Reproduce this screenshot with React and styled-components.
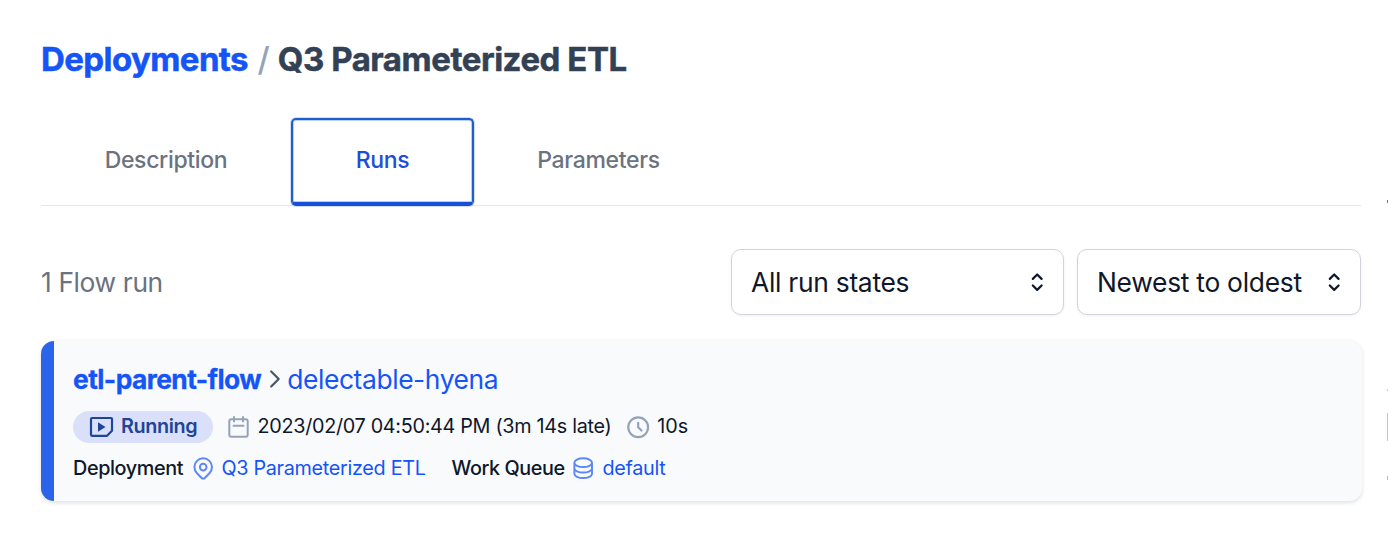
import React from "react";
import styled, { createGlobalStyle } from "styled-components";

const GlobalStyle = createGlobalStyle`
  * { box-sizing: border-box; }
  body {
    margin: 0;
    background: #fff;
    color: #0f172a;
    font-family: Inter, "Liberation Sans", sans-serif;
    overflow: hidden;
  }
`;

const Page = styled.div`
  display: flex;
  justify-content: space-between;
  height: 548px;
  overflow: hidden;
`;

const Main = styled.main`
  width: 1321px;
  margin-left: 41px;
  padding-top: 35px;
`;

const Heading = styled.h1`
  display: flex;
  align-items: center;
  height: 48px;
  margin: 0;
  font-size: 33px;
  font-weight: 700;
  letter-spacing: -0.46px;
  color: #334155;
  white-space: nowrap;
  -webkit-text-stroke: 0.5px currentColor;
`;

const HeadingLink = styled.a`
  color: #1554f6;
  letter-spacing: -0.58px;
`;

const Slash = styled.span`
  margin: 0 8.5px 0 9.5px;
  font-weight: 500;
  color: #94a3b8;
  -webkit-text-stroke: 0;
`;

const Tabs = styled.nav`
  display: flex;
  width: 1320px;
  height: 88px;
  margin-top: 35px;
  box-shadow: inset 0 -1px #e5e7eb;
`;

const Tab = styled.button`
  width: ${(p) => p.$width}px;
  height: 88px;
  padding: 0 0 4px;
  border: 0;
  background: transparent;
  font: 500 23px/28px Inter, "Liberation Sans", sans-serif;
  letter-spacing: -0.33px;
  color: #6b7280;
  white-space: nowrap;
  ${(p) =>
    p.$active &&
    `
    padding: 0 0 2px;
    color: #1d4ed8;
    background: #fff;
    border: 2px solid #1f5fcd;
    border-bottom: 4px solid #1650d8;
    border-radius: 5px;
    box-shadow: inset 0 0 0 1px rgba(31, 95, 205, 0.3), 0 0 0 1px rgba(31, 95, 205, 0.2);
  `}
`;

const Toolbar = styled.div`
  display: flex;
  align-items: center;
  gap: 13px;
  width: 1320px;
  height: 66px;
  margin-top: 43px;
`;

const Count = styled.span`
  flex: 1;
  padding-bottom: 1px;
  font-size: 26.4px;
  letter-spacing: -0.38px;
  color: #6b7280;
`;

const Select = styled.button`
  display: flex;
  align-items: center;
  justify-content: space-between;
  width: ${(p) => p.$width}px;
  height: 66px;
  padding: 0 12.5px 0 19px;
  border: 1px solid #d1d5db;
  border-radius: 10px;
  background: #fff;
  box-shadow: 0 1px 3px rgba(0, 0, 0, 0.06);
  font: 400 26.4px/32px Inter, "Liberation Sans", sans-serif;
  letter-spacing: -0.28px;
  color: #0f172a;
  white-space: nowrap;
`;

const SelectValue = styled.span`
  padding-bottom: 1px;
`;

const Card = styled.article`
  width: 1320.5px;
  height: 160px;
  margin-top: 26px;
  padding: 21px 0 0 19px;
  border-left: 13px solid #2b63eb;
  border-radius: 13px;
  background: #f8fafc;
  box-shadow: 0 1.5px 4px rgba(0, 0, 0, 0.12);
  white-space: nowrap;
`;

const FlowTitle = styled.div`
  display: flex;
  align-items: center;
  height: 34px;
  font-size: 26.4px;
  color: #1554f6;
`;

const FlowName = styled.a`
  padding-bottom: 1px;
  font-weight: 700;
  letter-spacing: -0.58px;
  -webkit-text-stroke: 0.3px currentColor;
`;

const RunName = styled.a`
  padding-bottom: 1px;
  letter-spacing: -0.4px;
`;

const Chevron = styled.svg`
  margin: 0 6px 0 7px;
`;

const Meta = styled.div`
  display: flex;
  align-items: center;
  height: 32px;
  margin-top: ${(p) => p.$top}px;
  font-size: 19.8px;
`;

const Badge = styled.span`
  display: flex;
  align-items: center;
  gap: 7px;
  width: 140px;
  height: 32px;
  padding-left: 16px;
  border-radius: 16px;
  background: #dbe0fa;
  color: #1e4597;
  font-weight: 600;
  letter-spacing: -0.38px;
`;

const Icon = styled.svg`
  flex: none;
  margin-left: ${(p) => p.$left || 0}px;
  margin-right: ${(p) => p.$right || 0}px;
  margin-bottom: ${(p) => p.$lift || 0}px;
`;

const Value = styled.span`
  padding-bottom: 2px;
  letter-spacing: ${(p) => p.$spacing ?? -0.3}px;
`;

const Label = styled(Value)`
  margin-left: ${(p) => p.$left || 0}px;
  font-weight: 500;
`;

const MetaLink = styled(Value)`
  color: #1554f6;
`;

const SidePanel = styled.aside`
  display: flex;
  flex-direction: column;
  width: 1px;
  padding-top: 200px;
`;

const Sliver = styled.span`
  height: ${(p) => p.$height}px;
  margin-bottom: ${(p) => p.$after}px;
  background: ${(p) => p.$color};
`;

const OutlineIcon = ({ color, left, right, lift, weight = 2, children }) => (
  <Icon
    $left={left}
    $right={right}
    $lift={lift}
    width="26.4"
    height="26.4"
    viewBox="0 0 24 24"
    fill="none"
    stroke={color}
    strokeWidth={weight}
    strokeLinecap="round"
    strokeLinejoin="round"
  >
    {children}
  </Icon>
);

const Updown = () => (
  <OutlineIcon color="#0f172a">
    <path d="M8 9l4-4 4 4m0 6l-4 4-4-4" />
  </OutlineIcon>
);

export default function App() {
  return (
    <Page>
      <GlobalStyle />
      <Main>
        <Heading>
          <HeadingLink>Deployments</HeadingLink>
          <Slash>/</Slash>
          <span>Q3 Parameterized ETL</span>
        </Heading>
        <Tabs>
          <Tab $width={250}>Description</Tab>
          <Tab $width={183} $active>Runs</Tab>
          <Tab $width={249}>Parameters</Tab>
        </Tabs>
        <Toolbar>
          <Count>1 Flow run</Count>
          <Select $width={333}>
            <SelectValue>All run states</SelectValue>
            <Updown />
          </Select>
          <Select $width={284}>
            <SelectValue>Newest to oldest</SelectValue>
            <Updown />
          </Select>
        </Toolbar>
        <Card>
          <FlowTitle>
            <FlowName>etl-parent-flow</FlowName>
            <Chevron width="13" height="20" viewBox="0 0 13 20" fill="none" stroke="#475569" strokeWidth="2.2" strokeLinecap="round" strokeLinejoin="round">
              <path d="m3.200 2.500 7.500 7.500-7.500 7.500" />
            </Chevron>
            <RunName>delectable-hyena</RunName>
          </FlowTitle>
          <Meta $top={15}>
            <Badge>
              <svg width="25" height="22" viewBox="0 0 25 22" fill="none" stroke="#1e4597" strokeWidth="2.2" strokeLinejoin="round">
                <path d="M3 2h19a1 1 0 0 1 1 1v11.800L18 19.800H3a1 1 0 0 1-1-1V3a1 1 0 0 1 1-1Z" />
                <path d="m9 6.300 7.500 4.700L9 15.700Z" fill="#1e4597" stroke="none" />
              </svg>
              <Value $spacing={-0.38}>Running</Value>
            </Badge>
            <Icon $left={15} $right={8.5} width="21" height="22" viewBox="0 0 21 22" fill="none" stroke="#94a3b8" strokeWidth="2" strokeLinecap="round">
              <rect x="1.300" y="3.200" width="18.400" height="17.600" rx="2" />
              <path d="M6 1v4.500M15 1v4.500M5.500 9.800h10" />
            </Icon>
            <Value>2023/02/07 04:50:44 PM (3m 14s late)</Value>
            <OutlineIcon left={14} right={5.5} color="#94a3b8">
              <path d="M12 8v4l3 3m6-3a9 9 0 11-18 0 9 9 0 0118 0z" />
            </OutlineIcon>
            <Value $spacing={0}>10s</Value>
          </Meta>
          <Meta $top={10}>
            <Label $spacing={-0.38}>Deployment</Label>
            <OutlineIcon left={6.5} right={5.5} lift={1.5} color="#5c88f8" weight={1.8}>
              <path d="M17.657 16.657L13.414 20.9a1.998 1.998 0 01-2.827 0l-4.244-4.243a8 8 0 1111.314 0z" />
              <path d="M15 11a3 3 0 11-6 0 3 3 0 016 0z" />
            </OutlineIcon>
            <MetaLink>Q3 Parameterized ETL</MetaLink>
            <Label $left={26} $spacing={-0.43}>Work Queue</Label>
            <OutlineIcon left={5} right={6.5} lift={1} color="#5c88f8" weight={1.8}>
              <path d="M4 7v10c0 2.210 3.582 4 8 4s8-1.790 8-4V7M4 7c0 2.210 3.582 4 8 4s8-1.790 8-4M4 7c0-2.210 3.582-4 8-4s8 1.790 8 4m0 5c0 2.210-3.582 4-8 4s-8-1.790-8-4" />
            </OutlineIcon>
            <MetaLink>default</MetaLink>
          </Meta>
        </Card>
      </Main>
      <SidePanel>
        <Sliver $height={3} $after={186} $color="#777" />
        <Sliver $height={2} $after={22} $color="#ccc" />
        <Sliver $height={28} $after={35} $color="#c4c4c4" />
        <Sliver $height={4} $after={0} $color="#bbb" />
      </SidePanel>
    </Page>
  );
}
